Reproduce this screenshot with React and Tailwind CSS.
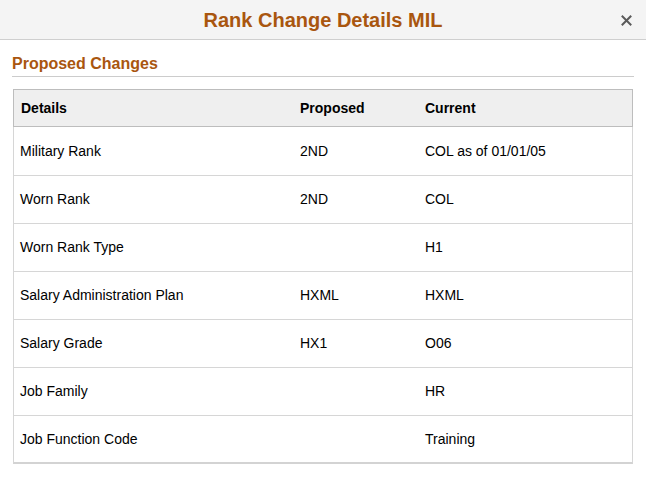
import React from 'react';

const rows = [
  { label: 'Military Rank', proposed: '2ND', current: 'COL as of 01/01/05' },
  { label: 'Worn Rank', proposed: '2ND', current: 'COL' },
  { label: 'Worn Rank Type', proposed: '', current: 'H1' },
  { label: 'Salary Administration Plan', proposed: 'HXML', current: 'HXML' },
  { label: 'Salary Grade', proposed: 'HX1', current: 'O06' },
  { label: 'Job Family', proposed: '', current: 'HR' },
  { label: 'Job Function Code', proposed: '', current: 'Training' },
];

function rowClass(i) {
  if (i === 0) return 'grid grid-cols-[280px_125px_1fr] h-[49px] items-center border-b border-[#d6d6d6]';
  if (i === rows.length - 1) return 'grid grid-cols-[280px_125px_1fr] h-[46px] items-center';
  return 'grid grid-cols-[280px_125px_1fr] h-[48px] items-center border-b border-[#d6d6d6]';
}

function App() {
  return (
    <div className="w-[646px] h-[489px] bg-white font-['Liberation_Sans',Arial,sans-serif] text-black">
      {/* modal header */}
      <div className="relative h-[40px] bg-[#f4f4f4] border-b border-[#cfcfcf] flex items-center justify-center">
        <h1 className="text-[20px] leading-[24px] font-bold text-[#a9560f]">Rank Change Details MIL</h1>
        <button className="absolute right-[14px] top-[14px] w-[12px] h-[12px] flex items-center justify-center" aria-label="Close">
          <svg width="11" height="11" viewBox="0 0 11 11">
            <path d="M1.5 1.5 L9.5 9.5 M9.5 1.5 L1.5 9.5" stroke="#5a5a5a" strokeWidth="2" strokeLinecap="square" />
          </svg>
        </button>
      </div>

      <div className="mx-[12px]">
        <h2 className="mt-[15px] pb-[3px] text-[16px] leading-[18px] font-bold text-[#a9560f] border-b border-[#cccccc]">
          Proposed Changes
        </h2>

        <div className="mt-[12px] mx-[1px] border-x border-[#d6d6d6] border-b-2 border-b-[#d3d3d3] text-[14px]">
          <div className="grid grid-cols-[280px_125px_1fr] h-[38px] items-center bg-[#efefef] border border-[#bdbdbd] -mx-px font-bold">
            <div className="pl-[7px]">Details</div>
            <div className="pl-[6px]">Proposed</div>
            <div className="pl-[6px]">Current</div>
          </div>
          {rows.map((row, i) => (
            <div key={row.label} className={rowClass(i)}>
              <div className="pl-[6px]">{row.label}</div>
              <div className="pl-[6px]">{row.proposed}</div>
              <div className="pl-[6px]">{row.current}</div>
            </div>
          ))}
        </div>
      </div>
    </div>
  );
}

export default App;
